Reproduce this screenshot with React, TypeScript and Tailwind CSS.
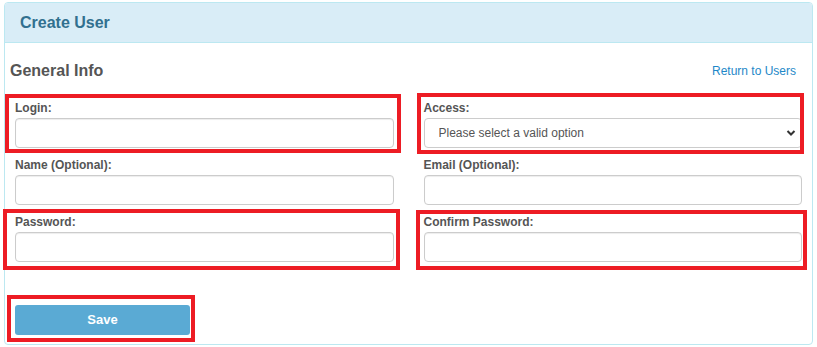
import React from 'react';

const font = { fontFamily: '"Liberation Sans", Arial, sans-serif' };

type Mark = { top: number; right: number; bottom: number; left: number };

// red annotation frame drawn over a form group
const Frame = ({ className }: { className: string }) => (
  <span className={`pointer-events-none absolute border-4 border-[#ed1c24] ${className}`} />
);

const Field = ({
  label,
  type = 'text',
  frame,
}: {
  label: string;
  type?: string;
  frame?: string;
}) => (
  <div className="relative mb-[9px]">
    <label className="block text-[12px] leading-[17px] font-bold text-[#555] mb-[1px]">{label}</label>
    <input
      type={type}
      className="block w-full h-[30px] rounded-[4px] border border-[#ccc] bg-white px-[12px] text-[12px] text-[#555] outline-none shadow-[inset_0_1px_1px_rgba(0,0,0,0.075)]"
    />
    {frame && <Frame className={frame} />}
  </div>
);

const App = () => {
  return (
    <div className="w-[817px] h-[347px] bg-white pt-[2px]" style={font}>
      <div className="mx-[4px] h-[343px] border border-[#bce8f1] rounded-[4px] bg-white">
        {/* Header */}
        <div className="h-[40px] bg-[#d9edf7] border-b border-[#bce8f1] rounded-t-[3px] px-[15px] flex items-center">
          <h1 className="text-[16px] font-bold text-[#31708f]">Create User</h1>
        </div>

        {/* Body */}
        <div className="pt-[18px]">
          <div className="flex items-center justify-between h-[20px] pl-[5px] pr-[16px]">
            <h2 className="text-[16px] leading-[20px] font-bold text-[#555]">General Info</h2>
            <a href="#" className="text-[12px] text-[#1e88c8]">Return to Users</a>
          </div>

          <div className="px-[10px] pt-[19px]">
            <div className="grid grid-cols-2 gap-x-[30px]">
              <Field label="Login:" frame="-left-[10px] -right-[7px] -top-[6px] -bottom-[5px]" />

              <div className="relative mb-[9px]">
                <label className="block text-[12px] leading-[17px] font-bold text-[#555] mb-[1px]">Access:</label>
                <div className="relative">
                  <select className="block w-full h-[30px] appearance-none rounded-[4px] border border-[#ccc] bg-white pl-[14px] pr-[28px] text-[12px] text-[#555] outline-none">
                    <option>Please select a valid option</option>
                  </select>
                  <svg
                    className="pointer-events-none absolute right-[6px] top-[11px]"
                    width="10"
                    height="8"
                    viewBox="0 0 10 8"
                    fill="none"
                  >
                    <path d="M1.5 2 L5 5.5 L8.5 2" stroke="#333" strokeWidth="2" />
                  </svg>
                </div>
                <Frame className="-left-[7px] -right-[2px] -top-[7px] -bottom-[6px]" />
              </div>

              <Field label="Name (Optional):" />
              <Field label="Email (Optional):" type="email" />

              <Field label="Password:" type="password" frame="-left-[12px] -right-[6px] -top-[5px] -bottom-[8px]" />
              <Field label="Confirm Password:" type="password" frame="-left-[8px] -right-[5px] -top-[4px] -bottom-[8px]" />
            </div>

            <div className="relative w-[175px] mt-[34px]">
              <button className="w-full h-[30px] rounded-[3px] bg-[#5aaad4] text-white text-[13px] font-bold">
                Save
              </button>
              <Frame className="-left-[8px] -right-[5px] -top-[10px] -bottom-[7px]" />
            </div>
          </div>
        </div>
      </div>
    </div>
  );
};

export default App;
